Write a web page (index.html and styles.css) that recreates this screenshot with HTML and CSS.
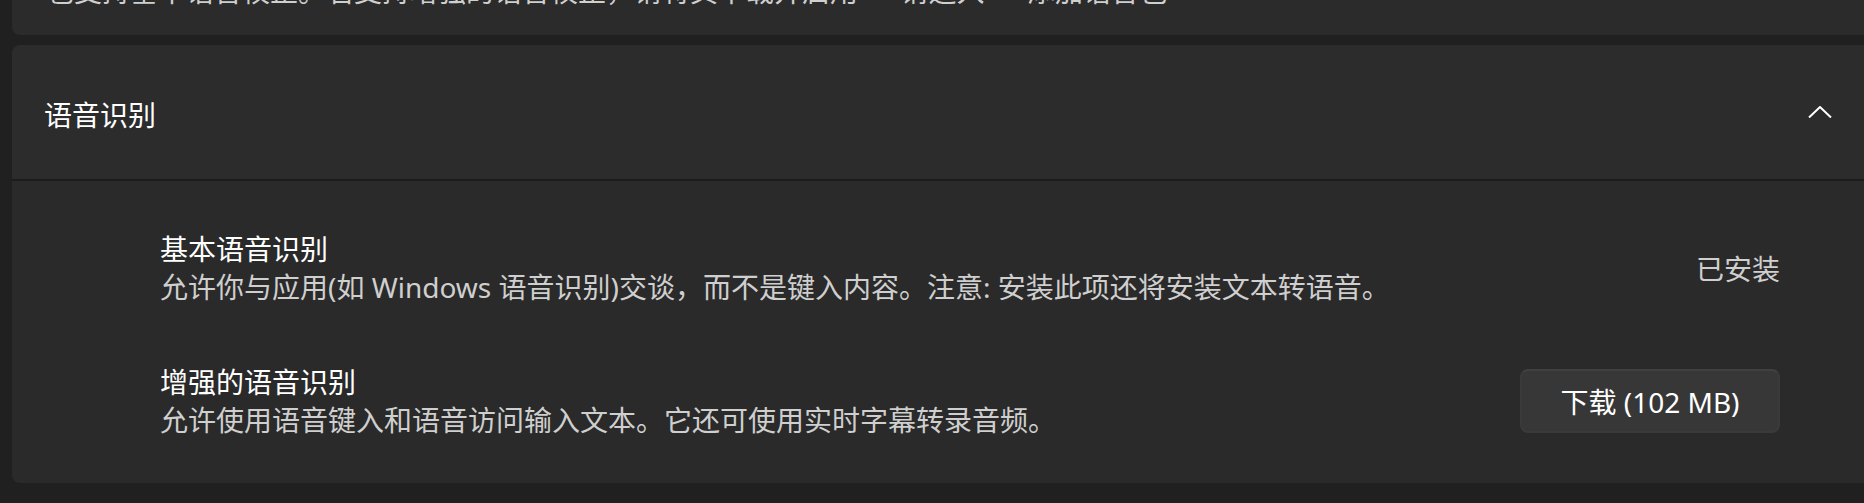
FILE: index.html
```html
<!DOCTYPE html>
<html lang="zh-CN">

<head>
    <meta charset="UTF-8">
    <meta name="viewport" content="width=device-width, initial-scale=1.0">
    <title>语音</title>
    <link rel="stylesheet" href="styles.css">
</head>

<body>
    <div class="page">
        <section class="card card-top">
            <p class="card-desc">也支持基本语音校正。若支持增强的语音校正，请将其下载并启用 — 请进入 — 添加语言包</p>
        </section>

        <section class="expander">
            <div class="expander-head">
                <span class="expander-title">语音识别</span>
                <svg class="chevron" width="24" height="12" viewBox="0 0 24 12">
                    <path d="M1 11.5 L12 1 L23 11.5" fill="none" stroke="#ffffff" stroke-width="2" />
                </svg>
            </div>

            <div class="expander-body">
                <div class="option">
                    <div class="option-text">
                        <div class="option-title">基本语音识别</div>
                        <div class="option-desc">允许你与应用(如 Windows 语音识别)交谈，而不是键入内容。注意: 安装此项还将安装文本转语音。</div>
                    </div>
                    <span class="status">已安装</span>
                </div>

                <div class="option">
                    <div class="option-text">
                        <div class="option-title">增强的语音识别</div>
                        <div class="option-desc">允许使用语音键入和语音访问输入文本。它还可使用实时字幕转录音频。</div>
                    </div>
                    <button type="button" class="btn">下载 (102 MB)</button>
                </div>
            </div>
        </section>
    </div>
</body>

</html>
```

FILE: styles.css
```css
body {
    margin: 0;
    height: 503px;
    overflow: hidden;
    background-color: #202020;
    color: #ffffff;
    font-family: "Noto Sans", "Noto Sans CJK SC", sans-serif;
    font-size: 28px;
}

.page {
    margin-right: -8px;
    padding-left: 12px;
}

.card-top {
    margin-top: -28px;
    padding: 0 32px 25px 34px;
    background-color: #2b2b2b;
    border-radius: 0 0 8px 8px;
}

.card-desc {
    margin: 0;
    line-height: 38px;
    color: #cfcfcf;
    white-space: nowrap;
}

.expander {
    margin-top: 10px;
    border-radius: 8px;
}

.expander-head {
    display: flex;
    align-items: center;
    justify-content: space-between;
    height: 134px;
    padding: 0 40px 0 32px;
    background-color: #2c2c2c;
    border-bottom: 2px solid #1c1c1c;
    border-radius: 8px 8px 0 0;
}

.expander-title {
    padding-top: 4px;
}

.chevron {
    display: block;
}

.expander-body {
    padding: 20px 92px 16px 148px;
    background-color: #2a2a2a;
    border-radius: 0 0 8px 8px;
}

.option {
    display: flex;
    align-items: center;
    justify-content: space-between;
    height: 133px;
}

.option-title,
.option-desc {
    line-height: 38px;
}

.option-desc {
    color: #cfcfcf;
}

.status {
    color: #cfcfcf;
}

.btn {
    width: 260px;
    height: 64px;
    padding: 0;
    background-color: #373737;
    border: 2px solid #3a3a3a;
    border-top-color: #404040;
    border-radius: 8px;
    color: #ffffff;
    font: inherit;
}
```
